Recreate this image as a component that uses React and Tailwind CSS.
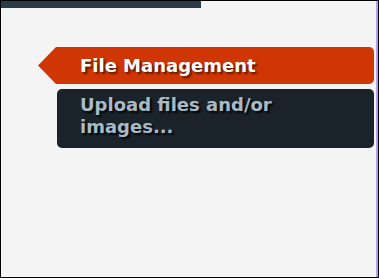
import React from 'react'

// Bandeau "File Management" avec flèche + carte sombre en dessous
const App = () => {
  return (
    <div className="w-[379px] h-[278px] bg-black p-px">
      <div className="w-full h-full bg-[#f4f4f4] border-r-2 border-[#b59cf0] flex flex-col" style={{ fontFamily: '"DejaVu Sans", sans-serif' }}>
        <div className="w-[200px] h-[7px] bg-[#2b3a44] shrink-0" />

        <div className="mt-[39px] ml-[37px] mr-[2px] flex h-[37px]">
          <svg width="18" height="37" viewBox="0 0 18 37" className="shrink-0 block">
            <polygon points="18,0 0,18.5 18,37" fill="#cf3604" />
          </svg>
          <div className="flex-1 bg-[#cf3604] rounded-r-[5px] flex items-center pl-[24px] pt-px">
            <span className="text-white font-bold text-[18px] leading-none [text-shadow:2px_2px_2px_rgba(0,0,0,0.55)]">
              File Management
            </span>
          </div>
        </div>

        <div className="mt-[5px] ml-[56px] mr-[2px] h-[59px] bg-[#1b232a] rounded-[5px] pl-[23px] pr-[20px] pt-[5px]">
          <p className="text-[#a8bac6] font-bold text-[18px] leading-[22px] [text-shadow:2px_2px_2px_rgba(0,0,0,0.9)]">
            Upload files and/or images...
          </p>
        </div>
      </div>
    </div>
  )
}

export default App
